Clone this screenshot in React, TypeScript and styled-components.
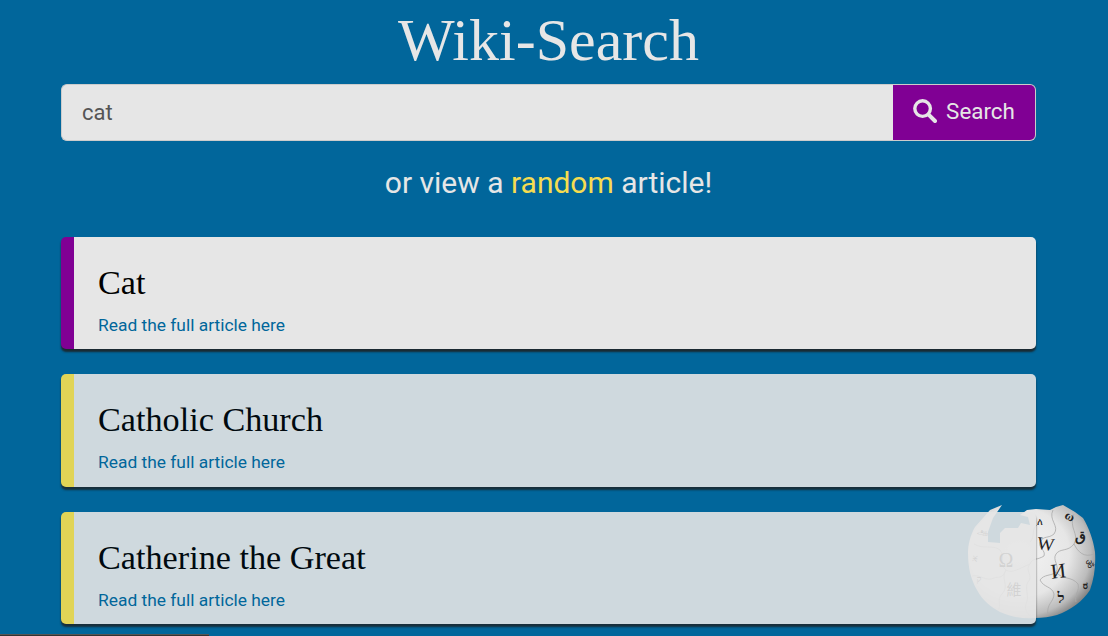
import styled, { createGlobalStyle } from 'styled-components'

const results = [
  { title: 'Cat', active: true },
  { title: 'Catholic Church', active: false },
  { title: 'Catherine the Great', active: false },
]

const GlobalStyle = createGlobalStyle`
  html, body {
    margin: 0;
    height: 100%;
    overflow: hidden;
    background-color: #01669b;
  }
  * {
    box-sizing: border-box;
  }
`

function WikiGlobe() {
  return (
    <GlobeSvg viewBox="0 0 128 116" aria-hidden="true">
      <defs>
        <radialGradient id="ball" cx="0.4" cy="0.42" r="0.66">
          <stop offset="0" stopColor="#f4f4f4" />
          <stop offset="0.6" stopColor="#e6e6e6" />
          <stop offset="0.85" stopColor="#bcbcbc" />
          <stop offset="1" stopColor="#7c7c7c" />
        </radialGradient>
      </defs>
      <path
        fill="url(#ball)"
        d="M34 1 L22 6 L15 14 L7 23 C2 32 0 41 0 49 C0 64 3 76 9 86 C15 97 23 103 32 108 C43 113 55 115 67 114 C75 114 82 113 89 111 C103 106 115 97 122 86 C126 75 128 62 127 48 C125 35 121 24 115 14 L107 8 L95 1 L88 3 L82 6 L68 5 L59 6 L52 11 L60 13 L62 21 L53 19 L50 24 L37 24 L32 29 L32 39 L20 38 L20 28 L25 14 Z"
      />
      <g fill="none" stroke="#a9a9a9" strokeWidth="0.8">
        <path d="M85 6 C80 16 92 22 86 30 C80 35 76 31 72 38 C70 44 78 46 76 52 C70 56 64 54 62 60" />
        <path d="M106 10 C100 24 112 30 106 40 C100 48 92 44 88 50 C84 56 92 62 88 68 C84 72 76 70 72 76" />
        <path d="M62 60 C56 66 66 72 60 78 C56 84 62 92 58 100 C56 106 60 110 64 114" />
        <path d="M88 68 C94 76 104 72 110 80 C112 86 106 92 108 98" />
        <path d="M72 76 C76 84 84 82 86 90 C86 98 78 100 80 111" />
        <path d="M62 38 C68 32 62 26 70 20" />
        <path d="M6 40 C16 46 24 40 32 46 C38 54 30 60 38 66 C44 70 52 64 62 60" />
        <path d="M38 66 C32 74 42 82 34 90 C28 96 34 102 30 106" />
        <path d="M4 72 C12 70 18 78 26 74 C30 72 34 76 38 66" />
        <path d="M126 50 C116 54 110 48 106 40" />
      </g>
      <g fontFamily="'Liberation Serif', 'Noto Sans CJK SC', serif" textAnchor="middle" fill="#222222">
        <text x="77" y="46" fontSize="18" transform="rotate(8 77 46)">W</text>
        <text x="91" y="74" fontSize="21" transform="rotate(-6 91 74)">И</text>
        <text x="100" y="16" fontSize="13" fontWeight="700" transform="rotate(30 100 16)">ω</text>
        <text x="72" y="21" fontSize="10">ለ</text>
        <text x="112" y="37" fontSize="14" fontWeight="700">ق</text>
        <text x="118" y="60" fontSize="10" transform="rotate(80 118 60)">ॐ</text>
        <text x="117" y="85" fontSize="9" fontWeight="700">ರ</text>
        <text x="93" y="99" fontSize="15" fontWeight="700">ל</text>
        <text x="38" y="63" fontSize="20">Ω</text>
        <text x="46" y="91" fontSize="15">維</text>
        <text x="9" y="55" fontSize="9" transform="rotate(-80 9 55)">ж</text>
        <text x="14" y="30" fontSize="9">ஆ</text>
        <text x="11" y="78" fontSize="9">ק</text>
      </g>
    </GlobeSvg>
  )
}

function SearchIcon() {
  return (
    <svg width="24" height="24" viewBox="0 0 24 24" aria-hidden="true">
      <circle cx="9.6" cy="9.6" r="7.8" fill="none" stroke="currentColor" strokeWidth="3.4" />
      <path d="M15.6 15.6 L22 22" stroke="currentColor" strokeWidth="4" strokeLinecap="round" />
    </svg>
  )
}

export default function App() {
  return (
    <Page>
      <GlobalStyle />
      <WikiGlobe />
      <Container>
        <Title>Wiki-Search</Title>
        <SearchForm>
          <SearchInput readOnly value="cat" />
          <SearchButton type="button">
            <SearchIcon />
            Search
          </SearchButton>
        </SearchForm>
        <RandomLine>
          or view a <RandomLink href="#">random</RandomLink> article!
        </RandomLine>
        <ResultList>
          {results.map(result => (
            <ResultCard key={result.title} $active={result.active}>
              <ResultTitle>{result.title}</ResultTitle>
              <ResultLink href="#">Read the full article here</ResultLink>
            </ResultCard>
          ))}
        </ResultList>
      </Container>
      <StatusBar />
    </Page>
  )
}

const Page = styled.div`
  height: 636px;
  overflow: hidden;
  font-family: Roboto, 'Liberation Sans', sans-serif;
  color: #e6e6e6;
`

const Container = styled.div`
  width: 975px;
  margin-left: 61px;
`

const Title = styled.h1`
  margin: 0;
  height: 84px;
  padding-top: 9px;
  font-family: 'Liberation Serif', serif;
  font-size: 60px;
  font-weight: 400;
  line-height: 62px;
  text-align: center;
`

const SearchForm = styled.form`
  display: flex;
  height: 57px;
  margin: 0;
`

const SearchInput = styled.input`
  flex: 1;
  min-width: 0;
  padding: 0 20px;
  font-family: inherit;
  font-size: 22px;
  color: #555555;
  background-color: #e6e6e6;
  border: 1px solid #cccccc;
  border-right: none;
  border-radius: 6px 0 0 6px;
  outline: none;
`

const SearchButton = styled.button`
  display: flex;
  align-items: center;
  justify-content: center;
  gap: 9px;
  width: 143px;
  padding: 0 0 3px;
  font-family: inherit;
  font-size: 22.4px;
  color: #e6e6e6;
  background-color: #800094;
  border: 1px solid #cccccc;
  border-left: none;
  border-radius: 0 6px 6px 0;
`

const RandomLine = styled.p`
  margin: 0;
  padding-top: 24px;
  height: 95.8px;
  font-size: 30px;
  line-height: 36px;
  text-align: center;
`

const RandomLink = styled.a`
  color: #f5dc50;
  text-decoration: none;
`

const ResultList = styled.div`
  display: flex;
  flex-direction: column;
  gap: 25px;
`

const ResultCard = styled.article<{ $active: boolean }>`
  position: relative;
  z-index: 1;
  height: 112.5px;
  padding: 26px 24px 0;
  background-color: #e6e6e6;
  border-left: 13px solid ${p => (p.$active ? '#800094' : '#fae04f')};
  border-radius: 5px;
  box-shadow: 0 3px 2px rgba(30, 30, 30, 0.85);
  opacity: ${p => (p.$active ? 1 : 0.9)};
`

const ResultTitle = styled.h2`
  margin: 0 0 12px;
  font-family: 'Liberation Serif', serif;
  font-size: 34.2px;
  font-weight: 400;
  line-height: 39px;
  color: #000000;
`

const ResultLink = styled.a`
  font-size: 17.4px;
  line-height: 22px;
  color: #01669b;
  text-decoration: none;
`

const GlobeSvg = styled.svg`
  position: absolute;
  left: 968px;
  top: 504px;
  width: 128px;
  height: 116px;
`

const StatusBar = styled.div`
  position: absolute;
  left: 0;
  top: 634px;
  width: 209px;
  height: 2px;
  background-color: #333333;
  border-top: 1px solid #555555;
`
